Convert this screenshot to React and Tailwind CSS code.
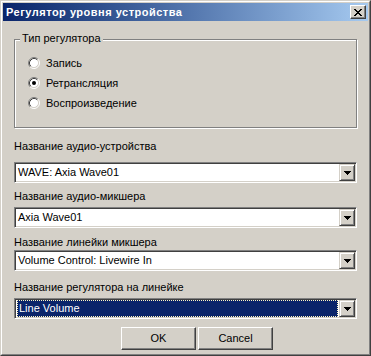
import React from "react";

const FONT = "font-['Liberation_Sans',Arial,sans-serif]";

/* ---------- small win2k widgets ---------- */
function Radio({ checked, label }) {
  return (
    <div className="flex h-[20px] items-center">
      <svg width="12" height="12" viewBox="0 0 12 12" className="shrink-0">
        <circle cx="6" cy="6" r="4.5" fill="#fff" />
        <path d="M2.11 9.89 A5.5 5.5 0 0 1 9.89 2.11" fill="none" stroke="#808080" strokeWidth="1" />
        <path d="M9.89 2.11 A5.5 5.5 0 0 1 2.11 9.89" fill="none" stroke="#fff" strokeWidth="1" />
        <path d="M2.82 9.18 A4.5 4.5 0 0 1 9.18 2.82" fill="none" stroke="#404040" strokeWidth="1" />
        <path d="M9.18 2.82 A4.5 4.5 0 0 1 2.82 9.18" fill="none" stroke="#d4d0c8" strokeWidth="1" />
        {checked && <circle cx="6" cy="6" r="2" fill="#000" />}
      </svg>
      <span className="ml-[6px] text-[11px] leading-[13px] text-black">{label}</span>
    </div>
  );
}

function Arrow() {
  return (
    <svg width="7" height="4" viewBox="0 0 7 4" shapeRendering="crispEdges">
      <rect x="0" y="0" width="7" height="1" fill="#000" />
      <rect x="1" y="1" width="5" height="1" fill="#000" />
      <rect x="2" y="2" width="3" height="1" fill="#000" />
      <rect x="3" y="3" width="1" height="1" fill="#000" />
    </svg>
  );
}

function Combo({ value, selected }) {
  return (
    <div className="flex h-[21px] w-full border border-t-[#808080] border-l-[#808080] border-b-white border-r-white bg-white p-px shadow-[inset_1px_1px_0_#404040,inset_-1px_-1px_0_#d4d0c8]">
      {selected ? (
        <div className="mx-px flex flex-1 items-center border border-dotted border-[#fff6c0] bg-[#0a246a] pl-px text-[11px] leading-[13px] text-white">
          {value}
        </div>
      ) : (
        <div className="flex flex-1 items-center pl-[2px] text-[11px] leading-[13px] text-black">{value}</div>
      )}
      <div className="flex h-full w-[16px] items-center justify-center border border-t-[#d4d0c8] border-l-[#d4d0c8] border-b-[#404040] border-r-[#404040] bg-[#d4d0c8] shadow-[inset_1px_1px_0_#fff,inset_-1px_-1px_0_#808080]">
        <Arrow />
      </div>
    </div>
  );
}

function Button({ children }) {
  return (
    <button className="flex h-[23px] w-[75px] items-center justify-center border border-t-white border-l-white border-b-[#404040] border-r-[#404040] bg-[#d4d0c8] text-[11px] leading-[13px] text-black shadow-[inset_-1px_-1px_0_#808080]">
      {children}
    </button>
  );
}

export default function App() {
  return (
    <div className={`${FONT} h-[356px] w-[371px] border border-t-[#d4d0c8] border-l-[#d4d0c8] border-b-[#404040] border-r-[#404040] bg-[#d4d0c8]`}>
      <div className="flex h-full flex-col border border-t-white border-l-white border-b-[#808080] border-r-[#808080] p-px">
        {/* title bar */}
        <div className="flex h-[18px] shrink-0 items-center bg-gradient-to-r from-[#0a246a] to-[#a6caf0] pl-[3px] pr-[2px]">
          <span className="text-[11px] font-bold leading-[13px] tracking-[0.5px] text-white">Регулятор уровня устройства</span>
          <div className="ml-auto flex h-[14px] w-[16px] items-center justify-center border border-t-white border-l-white border-b-[#404040] border-r-[#404040] bg-[#d4d0c8] shadow-[inset_-1px_-1px_0_#808080]">
            <svg width="8" height="7" viewBox="0 0 8 7" shapeRendering="crispEdges">
              <path d="M0 0h2v1h-2zM6 0h2v1h-2zM1 1h2v1h-2zM5 1h2v1h-2zM2 2h4v1h-4zM3 3h2v1h-2zM2 4h4v1h-4zM1 5h2v1h-2zM5 5h2v1h-2zM0 6h2v1h-2zM6 6h2v1h-2z" fill="#000" />
            </svg>
          </div>
        </div>

        {/* body */}
        <div className="flex flex-col px-[11px]">
          <div className="relative mt-[18px] h-[89px] border border-[#808080] pl-[13px] pt-[13px] shadow-[inset_1px_1px_0_#fff,1px_1px_0_#fff]">
            <span className="absolute -top-[8px] left-[5px] bg-[#d4d0c8] px-[2px] text-[11px] leading-[13px] text-black">
              Тип регулятора
            </span>
            <Radio label="Запись" />
            <Radio label="Ретрансляция" checked />
            <Radio label="Воспроизведение" />
          </div>

          <div className="mt-[12px] text-[11px] leading-[13px] text-black">Название аудио-устройства</div>
          <div className="mt-[9px]">
            <Combo value="WAVE: Axia Wave01" />
          </div>

          <div className="mt-[7px] text-[11px] leading-[13px] text-black">Название аудио-микшера</div>
          <div className="mt-[4px]">
            <Combo value="Axia Wave01" />
          </div>

          <div className="mt-[8px] text-[11px] leading-[13px] text-black">Название линейки микшера</div>
          <div className="mt-px">
            <Combo value="Volume Control: Livewire In" />
          </div>

          <div className="mt-[10px] text-[11px] leading-[13px] text-black">Название регулятора на линейке</div>
          <div className="mt-[4px]">
            <Combo value="Line Volume" selected />
          </div>

          <div className="mt-[8px] flex gap-[2px] pl-[107px]">
            <Button>OK</Button>
            <Button>Cancel</Button>
          </div>
        </div>
      </div>
    </div>
  );
}
